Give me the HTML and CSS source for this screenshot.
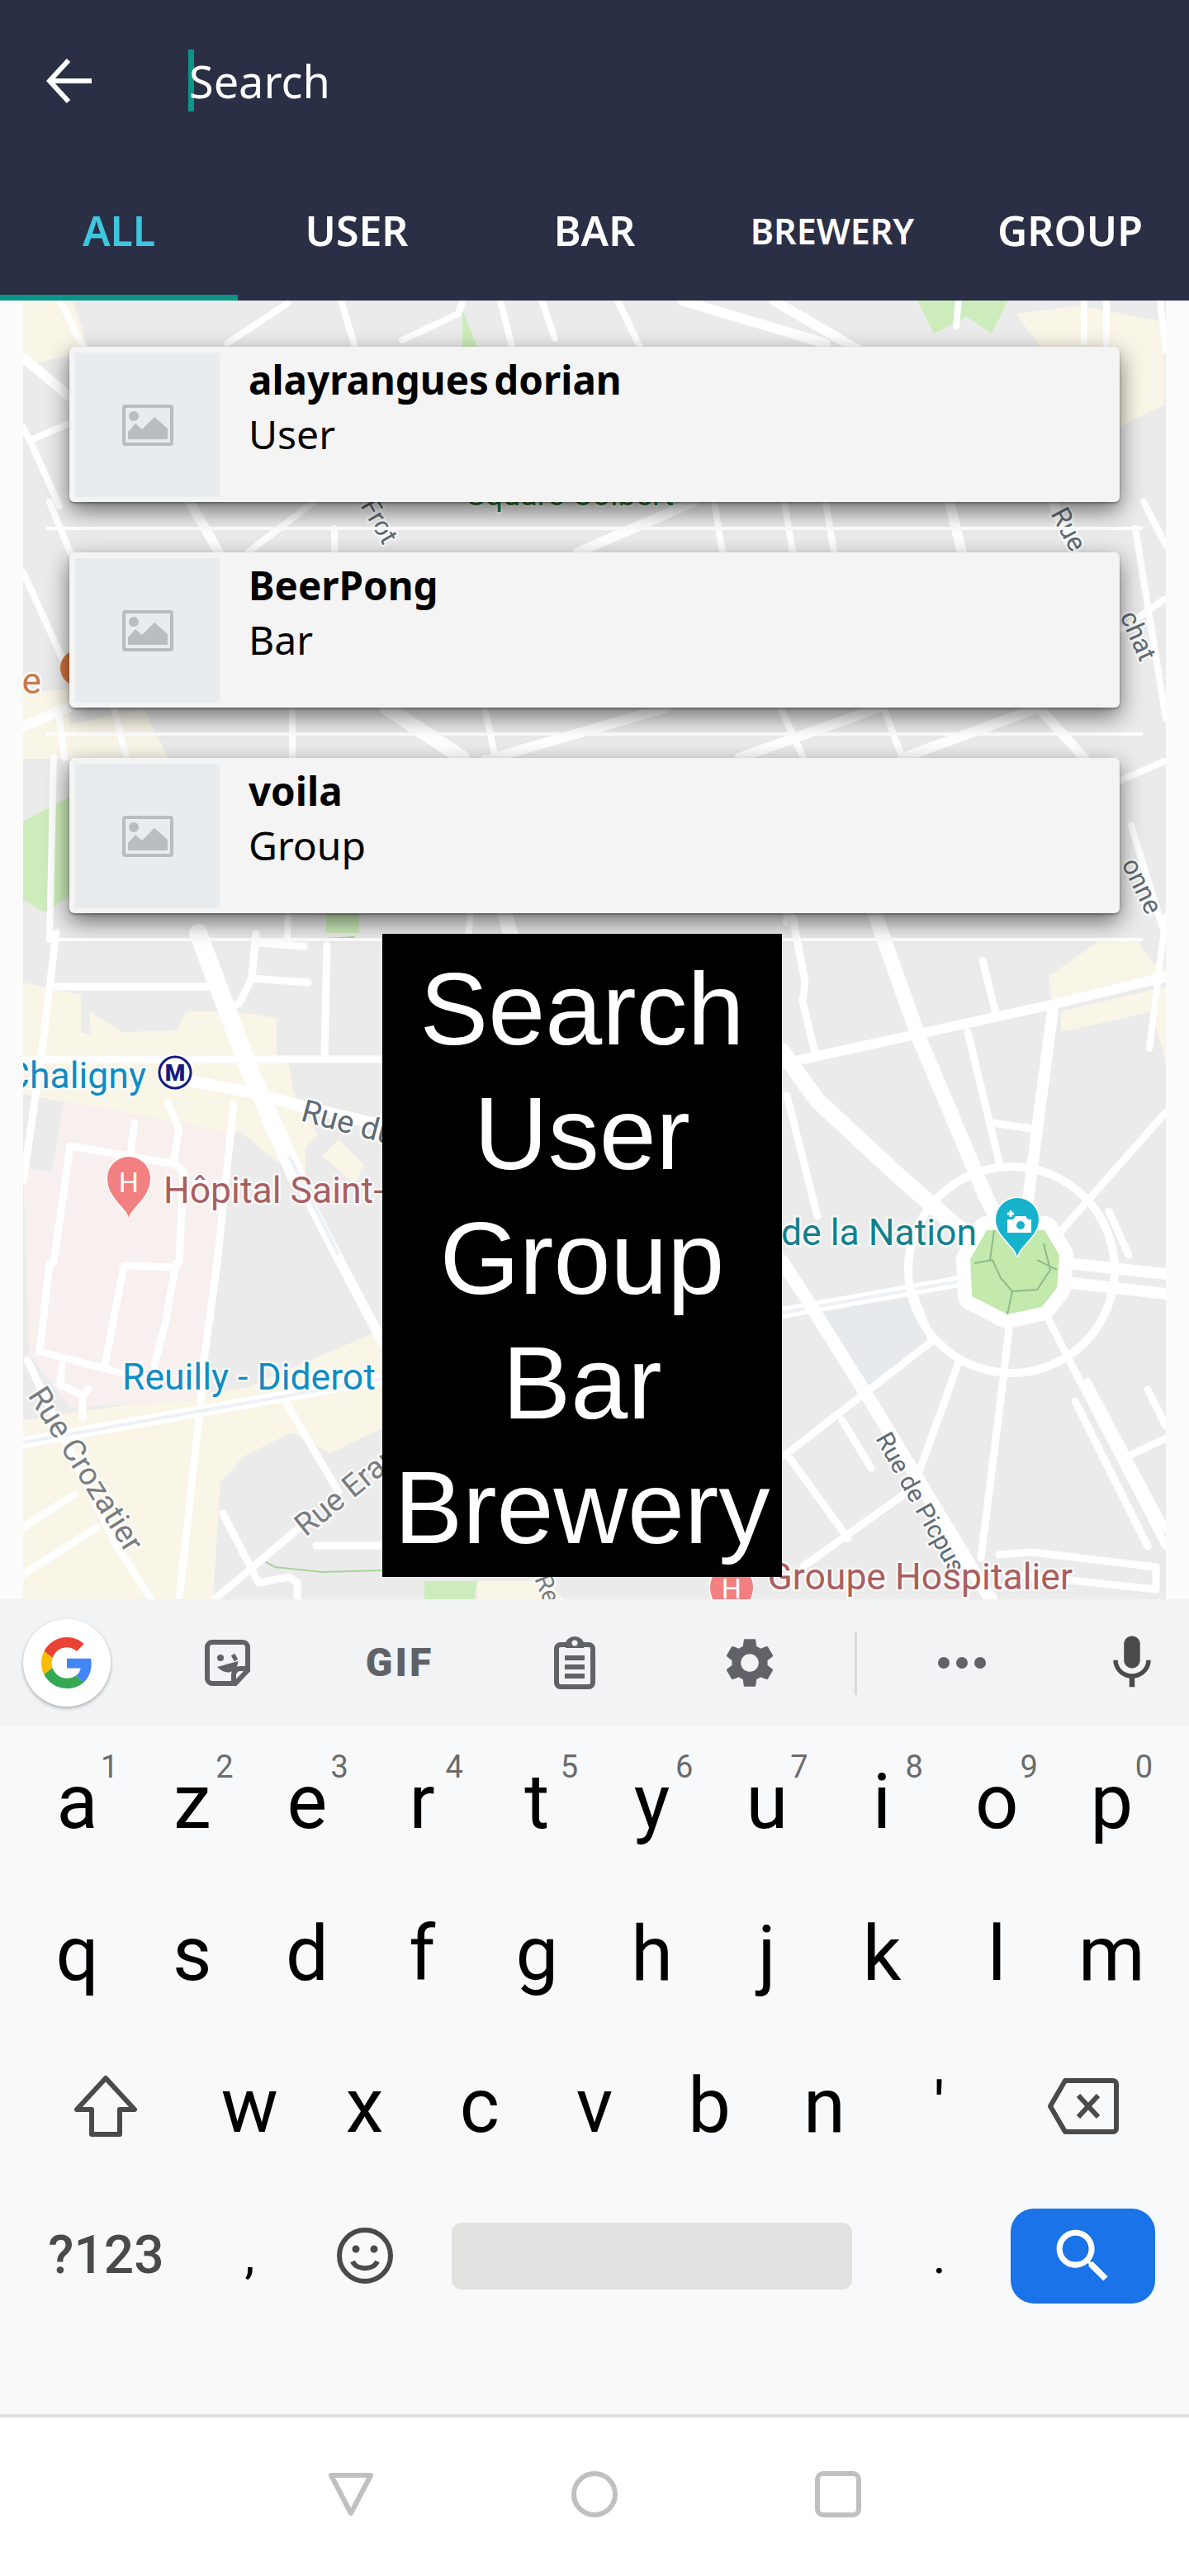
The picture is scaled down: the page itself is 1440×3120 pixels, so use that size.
FILE: index.html
```html
<!DOCTYPE html>
<html lang="en">
<head>
<meta charset="utf-8">
<title>Search</title>
<link rel="stylesheet" href="styles.css">
</head>
<body>
<div class="phone">
  <header class="appbar">
    <div class="searchbar">
      <svg class="back" viewBox="0 0 58 58"><path d="M55 29H5M27 4L4 29l23 25"/></svg>
      <div class="field"><span class="caret"></span><span class="placeholder">Search</span></div>
    </div>
    <nav class="tabs">
      <div class="tab active">ALL</div>
      <div class="tab">USER</div>
      <div class="tab">BAR</div>
      <div class="tab small">BREWERY</div>
      <div class="tab">GROUP</div>
    </nav>
  </header>

  <main class="stage">
    <div class="map">
      <svg class="mapart" viewBox="28 364 1384 1573" preserveAspectRatio="none">
        <rect class="land" x="28" y="364" width="1384" height="1573"/>
        <g class="cream">
          <path d="M28 364h60l20 60-80 20zM1270 1183l60-43 45-5 20 30 17 10v15l-137 30zM1285 1225l127-30v95l-16-65-111 25zM28 840l56-6v44l90-20 30 61H28z"/>
          <path d="M1230 380l80-10 100 20v100l-60 30-60-60z"/>
          <path d="M28 1190l70 15v45l12 3-2-28 24 15 16 10 67-2 10-23 60 0 50 8v47l15 10 5 30 30 55-15 15v30l-30-10-50-40-10 5-55-10-145-30-52-10z"/>
          <path d="M28 1720l272-40 163-70v120l-63 30-47-25-56 28-30 32-9 142H28z"/>
          <path d="M578 1915h85l20 22h-105z"/>
          <path d="M390 1400l20-20 30 30-10 25z"/>
        </g>
        <path class="pink" d="M77 1333l203 39-33 323-162 10-50-65-7-227 35 7z"/>
        <path class="bluegrey" d="M997 1588l110-18 17 50-71 60z"/>
        <g class="green">
          <path d="M1111 364h110l-20 40-30-20-40 20zM560 375l18 45h-18zM28 995l56-30v120l-30 20-26-15z"/>
          <path d="M514 1915h64l-4 22h-60z"/>
          <path d="M385 600l40 0-20 8h-20z"/>
          <path d="M395 1100h40v30h-40z"/>
        </g>

        <g class="road w8">
          <path d="M1161 364l-3 31M1313 364l0 50M1340 364l0 60M1405 364l7 60M73 364l27 56M413 364l17 56M606 364l14 56M656 364l16 46M748 364l27 56"/>
          <path d="M349 367l-74 49M560 367l-5 13-68 32"/>
          <path d="M28 517l12 25 32 71M37 533l47-20M60 608l25 61M300 669l80-61M405 640v29M865 608l10 61M950 608l10 61M1000 608l10 61M1385 608l27 52"/>
          <path d="M28 693l50 110M1359 762l51-36M1355 946l55-24M1370 1000l40 130M1375 640l37 230M1412 1110l-20 160"/>
          <path d="M70 857l8 61M138 857l15 61M354 857v61M587 857l13 61M1070 857l23 61M945 857l28 61"/>
          <path d="M65 918l-5 220M354 918l-6 220M587 918l-20 220"/>
          <path d="M972 918l-20 200M1093 918l-30 190"/>
        </g>
        <g class="road w12">
          <path d="M826 364l174 52M937 364l120 70M28 433l56 47M230 608l35 61M700 669l140-61M1150 608l15 61M1275 608l25 61M28 880l56-24M597 918l211-61M895 918l170-61M1093 918l165-61M1258 857l55 61"/>
        </g>
        <path class="road w18" d="M468 857l92 61 60 220"/>

        <g class="road w10">
          <path d="M68 1130l-18 150-22 150M65 1195h192M28 1283h442M396 1145l-3 135M163 1360l-5 37M85 1388l128 22 9 10-5 110M85 1388l-20 142M203 1335l14 33-7 39"/>
          <path d="M310 1130l-5 55-15 30-10 5M310 1142l58 4M305 1185l68 5"/>
          <path d="M283 1337l-20 193-16 117-4 53-26 237"/>
          <path d="M60 1530l-12 107 99 26M150 1533l-23 120M213 1530l-13 73-13 50M153 1533l60 2M75 1653l-2 24 27 13v27M100 1690l7-7"/>
          <path d="M33 1647l47 100 60 123 43 67M347 1700l63 107M363 1850l-103 87M270 1833l43 84 37-7 10 7v20M28 1850l62-40M28 1907l89-57M383 1872h80"/>
        </g>
        <path class="road w22" d="M240 1130l60 160 20 47 40 90"/>
        <path class="road w14" d="M233 1310l67 12 67 18 96 23"/>
        <path class="road w12" d="M360 1427l53 103 50 95"/>
        <path class="road w14" d="M28 1747l435-77M947 1590l226-40M1290 1553l122 14M1293 1530l119 13"/>
        <path class="lane" d="M28 1747l435-77M947 1590l226-40M350 1400l60 120"/>

        <g class="road w10">
          <path d="M960 1110l15 80-3 23 15 62M1190 1163l17 69M1172 1250l38 157M1202 1360l48 7M953 1327l37 146M1412 1347l-129 146M1343 1467l24 53"/>
          <path d="M1107 1570l21 53M1128 1625l-178 138M1160 1653l-47 130M1215 1670l-27 217M1222 1610l-7 60M1270 1598l33 65 109 210M1317 1673l95 180M1302 1697l88 176M1390 1683l22 44M1367 1763l45-21M1020 1720l35 58M957 1767l70 96M1113 1797l-140 100"/>
          <path d="M1210 1883l40-3 150 18v25M1240 1908l160 17"/>
        </g>
        <path class="road w12" d="M963 1285l310-68 139-34"/>
        <path class="road w18" d="M1057 1100l56 157 80 190 30 60"/>
        <path class="road w14" d="M1275 1223l-30 230"/>
        <path class="road w20" d="M947 1273l43 60 97 90 80 70"/>
        <path class="road w16" d="M947 1527l36 56 67 107 123 203 27 44"/>
        <circle class="ring" cx="1225" cy="1538" r="125"/>
        <path class="roundabout" d="M1195 1490h70l18 30-3 40-18 23-42 9-43-22-2-45z"/>
        <path class="parkline" d="M1180 1530l22-4 10 22 14 16 30-2 16-24-8-32M1226 1564l-6 28M1204 1490l-5 36M1256 1526l24 12"/>
        <path class="greenline" d="M322 1892l11 6 57 6 73-2M395 1137l35-2"/>

        <text class="lbl green-t" x="565" y="612">Square Colbert</text>
        <text class="lbl street s32" transform="translate(436 612) rotate(60)">Frot</text>
        <text class="lbl street s32" transform="translate(1272 622) rotate(62)">Rue</text>
        <text class="lbl street s32" transform="translate(1356 746) rotate(66)">chat</text>
        <text class="lbl street s32" transform="translate(1358 1046) rotate(64)">onne</text>
        <text class="lbl orange-t" x="50" y="840" text-anchor="end">e</text>
        <circle class="orange-pin" cx="95" cy="809" r="22"/>

        <text class="lbl blue-t" x="177" y="1318" text-anchor="end">Chaligny</text>
        <circle class="metro" cx="212" cy="1299" r="19"/>
        <text class="metro-m" x="212" y="1309" text-anchor="middle">M</text>
        <text class="lbl street s38" transform="translate(363 1357) rotate(15)">Rue du</text>

        <path class="pin-h" d="M156 1475c-3-13-26-24-26-48a26 26 0 0 1 52 0c0 24-23 35-26 48z"/>
        <text class="pin-letter" x="156" y="1444" text-anchor="middle">H</text>
        <text class="lbl red-t" x="198" y="1457">Hôpital Saint-</text>

        <text class="lbl blue-t" x="148" y="1683">Reuilly - Diderot</text>
        <text class="lbl street-g s38" transform="translate(33 1690) rotate(58)">Rue Crozatier</text>
        <text class="lbl street-g s38" transform="translate(370 1862) rotate(-39)">Rue Erar</text>
        <text class="lbl street s30" transform="translate(1060 1742) rotate(61)">Rue de Picpus</text>
        <text class="lbl street-g s30" transform="translate(647 1912) rotate(68)">Rei</text>

        <text class="lbl teal-t" x="1183" y="1508" text-anchor="end">de la Nation</text>
        <path class="pin-cam" d="M1232 1522c-3-14-26-25-26-45a26 26 0 0 1 52 0c0 20-23 31-26 45z"/>
        <path class="cam" d="M1220 1477h7l3-4h12l3 4h4v16h-29z"/>
        <circle class="cam-lens" cx="1236" cy="1484" r="5"/>
        <path class="cam-plus" d="M1220 1470h8M1224 1466v8"/>

        <path class="pin-h" d="M886 1970c-3-13-26-24-26-48a26 26 0 0 1 52 0c0 24-23 35-26 48z"/>
        <text class="pin-letter" x="886" y="1936" text-anchor="middle">H</text>
        <text class="lbl red-t" x="1299" y="1925" text-anchor="end">Groupe Hospitalier</text>
      </svg>

      <ul class="results">
        <li class="row">
          <article class="card">
            <div class="thumb"><svg class="thumb-icon" viewBox="0 0 62 50"><rect x="2" y="2" width="58" height="46" rx="2"/><circle cx="14" cy="14" r="6"/><path d="M7 42V33l9-10 8 7 15-15 16 14v13z"/></svg></div>
            <div class="info"><div class="name">alayrangues dorian</div><div class="kind">User</div></div>
          </article>
        </li>
        <li class="row">
          <article class="card">
            <div class="thumb"><svg class="thumb-icon" viewBox="0 0 62 50"><rect x="2" y="2" width="58" height="46" rx="2"/><circle cx="14" cy="14" r="6"/><path d="M7 42V33l9-10 8 7 15-15 16 14v13z"/></svg></div>
            <div class="info"><div class="name">BeerPong</div><div class="kind">Bar</div></div>
          </article>
        </li>
        <li class="row">
          <article class="card">
            <div class="thumb"><svg class="thumb-icon" viewBox="0 0 62 50"><rect x="2" y="2" width="58" height="46" rx="2"/><circle cx="14" cy="14" r="6"/><path d="M7 42V33l9-10 8 7 15-15 16 14v13z"/></svg></div>
            <div class="info"><div class="name">voila</div><div class="kind">Group</div></div>
          </article>
        </li>
      </ul>

      <div class="caption">Search<br>User<br>Group<br>Bar<br>Brewery</div>
    </div>
  </main>

  <section class="keyboard">
    <div class="toolbar">
      <div class="tool"><div class="gbtn"><svg class="glogo" viewBox="0 0 48 48">
        <path fill="#EA4335" d="M24 9.5c3.54 0 6.71 1.22 9.21 3.6l6.85-6.85C35.9 2.38 30.47 0 24 0 14.62 0 6.51 5.38 2.56 13.22l7.98 6.19C12.43 13.72 17.74 9.5 24 9.5z"/>
        <path fill="#4285F4" d="M46.98 24.55c0-1.57-.15-3.09-.38-4.55H24v9.02h12.94c-.58 2.96-2.26 5.48-4.78 7.18l7.73 6c4.51-4.18 7.09-10.36 7.09-17.65z"/>
        <path fill="#FBBC05" d="M10.53 28.59c-.48-1.45-.76-2.99-.76-4.59s.27-3.14.76-4.59l-7.98-6.19C.92 16.46 0 20.12 0 24c0 3.88.92 7.54 2.56 10.78l7.97-6.19z"/>
        <path fill="#34A853" d="M24 48c6.48 0 11.93-2.13 15.89-5.81l-7.73-6c-2.15 1.45-4.92 2.3-8.16 2.3-6.26 0-11.57-4.22-13.47-9.91l-7.98 6.19C6.51 42.62 14.62 48 24 48z"/>
      </svg></div></div>
      <div class="tool"><svg class="i-sticker" viewBox="0 0 57 58"><path class="ol" d="M10 4h37a6 6 0 0 1 6 6v28L38 54H10a6 6 0 0 1-6-6V10a6 6 0 0 1 6-6z"/><path class="ol" d="M53 36h-9a8 8 0 0 0-8 8v10"/><circle class="fl" cx="20" cy="23" r="4"/><path class="ol thin" d="M35 19l4 7"/><path class="fl" d="M16 34l25-7c1 11-12 20-25 7z"/></svg></div>
      <div class="tool"><span class="gif">GIF</span></div>
      <div class="tool"><svg class="i-clip" viewBox="0 0 52 66"><path class="ol" d="M9 11h34a5 5 0 0 1 5 5v41a5 5 0 0 1-5 5H9a5 5 0 0 1-5-5V16a5 5 0 0 1 5-5z"/><path class="fl" d="M15 10a11 9 0 0 1 22 0v5H15z"/><circle class="hole" cx="26" cy="9" r="3.5"/><path class="ol" d="M14 27h24M14 38h24M14 49h24"/></svg></div>
      <div class="tool"><svg class="i-gear" viewBox="0 0 24 24"><path d="M19.14 12.94c.04-.3.06-.61.06-.94 0-.32-.02-.64-.07-.94l2.03-1.58c.18-.14.23-.41.12-.61l-1.92-3.32c-.12-.22-.37-.29-.59-.22l-2.39.96c-.5-.38-1.03-.7-1.62-.94l-.36-2.54c-.04-.24-.24-.41-.48-.41h-3.84c-.24 0-.43.17-.47.41l-.36 2.54c-.59.24-1.13.57-1.62.94l-2.39-.96c-.22-.08-.47 0-.59.22L2.74 8.87c-.12.21-.08.47.12.61l2.03 1.58c-.05.3-.09.63-.09.94s.02.64.07.94l-2.03 1.58c-.18.14-.23.41-.12.61l1.92 3.32c.12.22.37.29.59.22l2.39-.96c.5.38 1.03.7 1.62.94l.36 2.54c.05.24.24.41.48.41h3.84c.24 0 .44-.17.47-.41l.36-2.54c.59-.24 1.13-.56 1.62-.94l2.39.96c.22.08.47 0 .59-.22l1.92-3.32c.12-.22.07-.47-.12-.61l-2.01-1.58zM12 15.6c-1.98 0-3.6-1.62-3.6-3.6s1.62-3.6 3.6-3.6 3.6 1.62 3.6 3.6-1.62 3.6-3.6 3.6z"/></svg></div>
      <div class="tool"><span class="vline"></span></div>
      <div class="tool"><div class="dots"><span></span><span></span><span></span></div></div>
      <div class="tool mic"><svg class="i-mic" viewBox="0 0 24 24"><path d="M12 14c1.66 0 2.99-1.34 2.99-3L15 5c0-1.66-1.34-3-3-3S9 3.34 9 5v6c0 1.66 1.34 3 3 3zm5.3-3c0 3-2.54 5.1-5.3 5.1S6.7 14 6.7 11H5c0 3.41 2.72 6.23 6 6.72V21h2v-3.28c3.28-.48 6-3.3 6-6.72h-1.7z"/></svg></div>
    </div>
    <div class="keys">
      <div class="keyrow">
        <div class="key">a<span class="hint">1</span></div>
        <div class="key">z<span class="hint">2</span></div>
        <div class="key">e<span class="hint">3</span></div>
        <div class="key">r<span class="hint">4</span></div>
        <div class="key">t<span class="hint">5</span></div>
        <div class="key">y<span class="hint">6</span></div>
        <div class="key">u<span class="hint">7</span></div>
        <div class="key">i<span class="hint">8</span></div>
        <div class="key">o<span class="hint">9</span></div>
        <div class="key">p<span class="hint">0</span></div>
      </div>
      <div class="keyrow">
        <div class="key">q</div><div class="key">s</div><div class="key">d</div><div class="key">f</div><div class="key">g</div>
        <div class="key">h</div><div class="key">j</div><div class="key">k</div><div class="key">l</div><div class="key">m</div>
      </div>
      <div class="keyrow row3">
        <div class="key"><svg class="i-shift" viewBox="0 0 78 76"><path d="M39 4l35 38H56v30H22V42H4z"/></svg></div>
        <div class="key">w</div><div class="key">x</div><div class="key">c</div><div class="key">v</div><div class="key">b</div><div class="key">n</div>
        <div class="key apos">'</div>
        <div class="key"><svg class="i-back" viewBox="0 0 88 70"><path d="M22 4h58a4 4 0 0 1 4 4v54a4 4 0 0 1-4 4H22L4 35z"/><path d="M38 22l24 26M62 22L38 48"/></svg></div>
      </div>
      <div class="keyrow row4">
        <div class="key sym">?123</div>
        <div class="key punct">,</div>
        <div class="key"><svg class="i-emoji" viewBox="0 0 70 70"><circle class="ol" cx="35" cy="35" r="31"/><circle class="fl" cx="24" cy="27" r="4.5"/><circle class="fl" cx="46" cy="27" r="4.5"/><path class="ol" d="M20 42c5 11 25 11 30 0"/></svg></div>
        <div class="key"><span class="space"></span></div>
        <div class="key punct">.</div>
        <div class="key"><span class="go"><svg class="i-search" viewBox="0 0 24 24"><path d="M15.5 14h-.79l-.28-.27C15.41 12.59 16 11.11 16 9.5 16 5.91 13.09 3 9.5 3S3 5.91 3 9.5 5.91 16 9.5 16c1.61 0 3.09-.59 4.23-1.57l.27.28v.79l5 4.99L20.49 19l-4.99-5zm-6 0C7.01 14 5 11.99 5 9.5S7.01 5 9.5 5 14 7.01 14 9.5 11.99 14 9.5 14z"/></svg></span></div>
      </div>
    </div>
  </section>

  <footer class="navbar">
    <svg class="nav-i" viewBox="0 0 60 60"><path d="M6 7h48L30 53z"/></svg>
    <svg class="nav-i" viewBox="0 0 60 60"><circle cx="30" cy="30" r="25"/></svg>
    <svg class="nav-i" viewBox="0 0 60 60"><rect x="5" y="5" width="50" height="50" rx="7"/></svg>
  </footer>
</div>
</body>
</html>
```

FILE: styles.css
```css
* { box-sizing: border-box; }
html, body { margin: 0; padding: 0; background: #fff; }
.phone { width: 1440px; height: 3120px; display: flex; flex-direction: column; overflow: hidden; font-family: "Noto Sans", sans-serif; }

/* app bar */
.appbar { height: 364px; background: #2b2f45; flex: none; display: flex; flex-direction: column; }
.searchbar { height: 196px; display: flex; align-items: flex-start; padding: 60px 0 0 56px; border-bottom: 2px solid #292d42; }
.back { width: 58px; height: 58px; margin-top: 9px; fill: none; stroke: #fff; stroke-width: 6; }
.field { margin-left: 114px; display: flex; position: relative; }
.caret { width: 7px; height: 75px; background: #0f9488; }
.placeholder { position: absolute; left: 1px; top: 1px; font-size: 54px; line-height: 74px; color: #fff; }
.tabs { flex: 1; display: grid; grid-template-columns: repeat(5, 288px); }
.tab { display: flex; align-items: center; justify-content: center; font-size: 50px; font-weight: 600; color: #fff; padding-top: 5px; border-bottom: 7px solid transparent; line-height: 1; }
.tab.small { font-size: 43px; }
.tab.active { color: #3fc5de; border-bottom-color: #0d9488; }

/* map + results */
.stage { flex: 1 1 0; background: #fbfbfb; padding: 0 28px; min-height: 0; }
.map { position: relative; height: 100%; overflow: hidden; }
.mapart { position: absolute; inset: 0; width: 100%; height: 100%; display: block; }
.land { fill: #ebebeb; }
.cream path { fill: #f9f5e7; }
.pink { fill: #f8efef; }
.bluegrey { fill: #e7eaed; }
.green path { fill: #cdecbb; }
.road { fill: none; stroke: #fff; stroke-linejoin: round; stroke-linecap: round; }
.w8 { stroke-width: 8; }
.w10 { stroke-width: 9; }
.w12 { stroke-width: 12; }
.w14 { stroke-width: 14; }
.w16 { stroke-width: 16; }
.w18 { stroke-width: 18; }
.w20 { stroke-width: 20; }
.w22 { stroke-width: 22; }
.lane { fill: none; stroke: #edf1f5; stroke-width: 4; }
.ring { fill: none; stroke: #fff; stroke-width: 10; }
.roundabout { fill: #c3eaac; stroke: #fff; stroke-width: 34; stroke-linejoin: round; paint-order: stroke; }
.parkline { fill: none; stroke: #8fb98a; stroke-width: 2; }
.greenline { fill: none; stroke: #a6d49a; stroke-width: 2; }

.lbl { font-family: Roboto, sans-serif; stroke: rgba(255,255,255,.75); stroke-width: 5; paint-order: stroke; stroke-linejoin: round; font-size: 44.5px; }
.blue-t { fill: #0f8cc3; }
.red-t { fill: #a95f60; }
.teal-t { fill: #14808c; }
.orange-t { fill: #c77a4a; }
.green-t { fill: #2f7a33; font-size: 38px; }
.street { fill: #5f6b75; }
.street-g { fill: #7a7d80; }
.s30 { font-size: 30px; }
.s32 { font-size: 32px; }
.s38 { font-size: 38px; }
.orange-pin { fill: #d4743f; }
.metro { fill: #fff; stroke: #141b80; stroke-width: 3; }
.metro-m { font-family: Roboto, sans-serif; font-weight: 900; font-size: 28px; fill: #141b80; }
.pin-h { fill: #f28080; stroke: #fff; stroke-width: 3; paint-order: stroke; }
.pin-letter { font-family: Roboto, sans-serif; font-size: 34px; fill: #fff; }
.pin-cam { fill: #17b2cc; stroke: #fff; stroke-width: 3; paint-order: stroke; }
.cam { fill: #fff; }
.cam-lens { fill: #17b2cc; }
.cam-plus { fill: none; stroke: #fff; stroke-width: 3; }

.results { position: relative; list-style: none; margin: 0 28px; padding: 29px 0 0; }
.row { padding: 27px 28px 30px; border-bottom: 4px solid #fff; }
.card { height: 188px; display: flex; padding: 7px; background: #f4f4f4; border-radius: 6px; box-shadow: 0 10px 28px rgba(0,0,0,.55), 0 2px 3px rgba(0,0,0,.3); }
.thumb { width: 175px; height: 175px; flex: none; background: #e8ecef; display: flex; align-items: center; justify-content: center; }
.thumb-icon { width: 62px; height: 50px; }
.thumb-icon rect { fill: none; stroke: #b9bdbf; stroke-width: 4; }
.thumb-icon circle, .thumb-icon path { fill: #b9bdbf; }
.info { padding-left: 35px; color: #000; font-size: 48px; line-height: 66px; }
.name { font-size: 47.5px; font-weight: 700; word-spacing: -6px; }

.caption { position: absolute; left: 435px; top: 767px; width: 484px; height: 779px; padding-top: 16px; background: #000; color: #fff; text-align: center; font-family: "Liberation Sans", Arial, sans-serif; font-size: 124px; line-height: 151px; }

/* keyboard */
.keyboard { flex: none; height: 987px; background: #f8f9fb; font-family: Roboto, sans-serif; }
.toolbar { height: 154px; background: #f1f3f4; display: grid; grid-template-columns: 162px 226px 192px 232px 192px 64px 194px 178px; align-items: center; justify-items: center; }
.tool { display: flex; align-items: center; justify-content: center; }
.tool.mic { padding-left: 40px; }
.gbtn { width: 106px; height: 106px; border-radius: 50%; background: #fff; box-shadow: 0 2px 4px rgba(0,0,0,.3); display: flex; align-items: center; justify-content: center; }
.glogo { width: 62px; height: 62px; }
.ol { fill: none; stroke: #5f6368; stroke-width: 6; }
.thin { stroke-width: 5; }
.fl { fill: #5f6368; }
.hole { fill: #f1f3f4; }
.i-sticker { width: 57px; height: 58px; }
.gif { font-weight: 900; font-size: 48px; letter-spacing: 3px; color: #5f6368; line-height: 1; }
.i-clip { width: 52px; height: 66px; }
.i-gear { width: 72px; height: 72px; fill: #5f6368; }
.vline { display: block; width: 3px; height: 77px; background: #d7d9db; }
.dots { display: flex; gap: 8px; }
.dots span { width: 14px; height: 14px; border-radius: 50%; background: #5f6368; }
.i-mic { width: 78px; height: 78px; fill: #4a4a4a; }

.keys { padding: 0 24px; }
.keyrow { height: 184px; display: grid; grid-template-columns: repeat(10, 1fr); grid-template-rows: 184px; }
.keyrow.row3 { grid-template-columns: 1.5fr repeat(7, 1fr) 1.5fr; }
.keyrow.row4 { grid-template-columns: 1.5fr 1fr 1fr 4fr 1fr 1.5fr; margin-top: -3px; }
.key { position: relative; display: flex; align-items: center; justify-content: center; font-size: 92px; line-height: 1; color: #000; }
.hint { position: absolute; left: 98px; top: 30px; font-size: 38px; line-height: 38px; color: #6b6b6b; }
.apos { font-size: 80px; }
.punct { font-size: 62px; }
.sym { font-size: 64px; font-weight: 500; color: #4a4a4a; }
.i-shift { width: 78px; height: 76px; fill: none; stroke: #4a4a4a; stroke-width: 6; stroke-linejoin: round; }
.i-back { width: 88px; height: 70px; fill: none; stroke: #4a4a4a; stroke-width: 6; stroke-linejoin: round; }
.i-emoji { width: 70px; height: 70px; }
.i-emoji .ol { stroke: #4a4a4a; }
.i-emoji .fl { fill: #4a4a4a; }
.space { display: block; width: 485px; height: 81px; background: #e1e3e1; border-radius: 12px; }
.go { width: 175px; height: 115px; background: #1a73e8; border-radius: 28px; display: flex; align-items: center; justify-content: center; }
.i-search { width: 85px; height: 85px; fill: #fff; }

/* nav */
.navbar { flex: none; height: 196px; border-top: 4px solid #e0e0e0; background: #fff; display: flex; justify-content: center; align-items: center; gap: 235px; padding-bottom: 6px; }
.nav-i { width: 60px; height: 60px; fill: none; stroke: #c0c0c0; stroke-width: 6; stroke-linejoin: round; }
```
